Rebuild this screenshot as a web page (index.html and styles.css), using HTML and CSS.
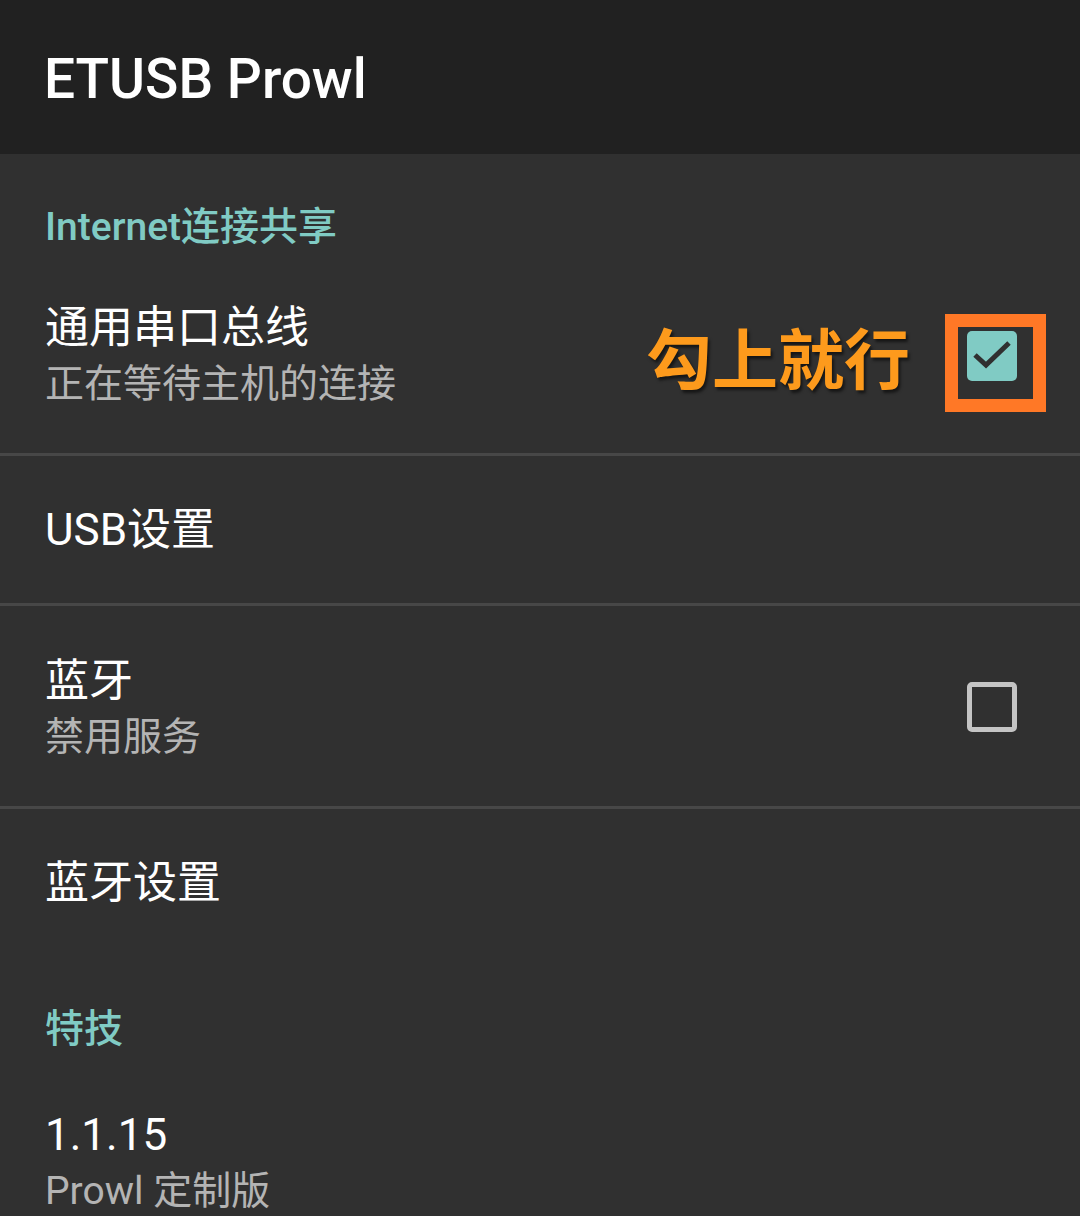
FILE: index.html
```html
<!DOCTYPE html>
<html lang="zh-CN">
<head>
<meta charset="utf-8">
<title>ETUSB Prowl</title>
<link rel="stylesheet" href="styles.css">
</head>
<body>
<div class="app">
  <header class="toolbar"><span class="toolbar-title">ETUSB Prowl</span></header>
  <main class="prefs">
    <div class="category">Internet连接共享</div>
    <div class="pref pref-two">
      <div class="pref-text">
        <div class="pref-title">通用串口总线</div>
        <div class="pref-summary">正在等待主机的连接</div>
      </div>
      <div class="note">勾上就行</div>
      <div class="check check-on">
        <svg class="tick" viewBox="0 0 50 50" width="50" height="50"><path d="M8 24 L19 34 L42 12" fill="none" stroke="#303030" stroke-width="5"/></svg>
        <span class="frame"></span>
      </div>
    </div>
    <div class="divider"></div>
    <div class="pref pref-one">
      <div class="pref-title">USB设置</div>
    </div>
    <div class="divider"></div>
    <div class="pref pref-two">
      <div class="pref-text">
        <div class="pref-title">蓝牙</div>
        <div class="pref-summary">禁用服务</div>
      </div>
      <div class="check check-off"></div>
    </div>
    <div class="divider"></div>
    <div class="pref pref-one">
      <div class="pref-title">蓝牙设置</div>
    </div>
    <div class="category">特技</div>
    <div class="pref pref-two pref-last">
      <div class="pref-text">
        <div class="pref-title">1.1.15</div>
        <div class="pref-summary">Prowl 定制版</div>
      </div>
    </div>
  </main>
</div>
</body>
</html>
```

FILE: styles.css
```css
* { box-sizing: border-box; }
html, body { margin: 0; padding: 0; }
body {
  background: #303030;
  font-family: Roboto, "Noto Sans CJK SC", sans-serif;
  color: #ffffff;
  width: 1080px;
  height: 1216px;
  overflow: hidden;
}
.toolbar {
  height: 154px;
  background: #212121;
  display: flex;
  align-items: center;
  padding: 0 44px;
}
.toolbar-title {
  font-size: 55px;
  font-weight: 500;
  line-height: 1;
  margin-top: 4px;
}
.prefs { display: flex; flex-direction: column; }
.category {
  padding: 47px 45px 0;
  line-height: 52px;
  font-size: 39px;
  font-weight: 500;
  color: #80cbc4;
}
.pref {
  display: flex;
  align-items: center;
  padding: 0 63px 0 45px;
}
.pref-one { height: 147px; }
.pref-two { height: 200px; padding-top: 47px; padding-bottom: 41px; }
.pref-last { padding-top: 52px; height: 165px; }
.pref-text { flex: 1; display: flex; flex-direction: column; align-self: flex-start; }
.pref-title { font-size: 44px; line-height: 56px; color: #ffffff; }
.pref-summary { font-size: 39px; line-height: 56px; color: #b4b4b4; }
.divider { height: 3px; background: #474747; }
.note {
  font-size: 66px;
  font-weight: 700;
  color: #fd9a1c;
  text-shadow: 2px 3px 3px rgba(0,0,0,0.55);
  margin-right: 57px;
  margin-top: 12px;
  line-height: 1;
}
.check {
  width: 50px;
  height: 50px;
  border-radius: 5px;
  position: relative;
  flex: none;
}
.check-on { background: #80cbc4; }
.tick { display: block; }
.check-off { border: 5px solid #c4c4c4; border-radius: 5px; margin-top: -4px; }
.frame {
  position: absolute;
  left: -22px;
  top: -17px;
  width: 101px;
  height: 98px;
  border: 13px solid #ff7826;
}
```
